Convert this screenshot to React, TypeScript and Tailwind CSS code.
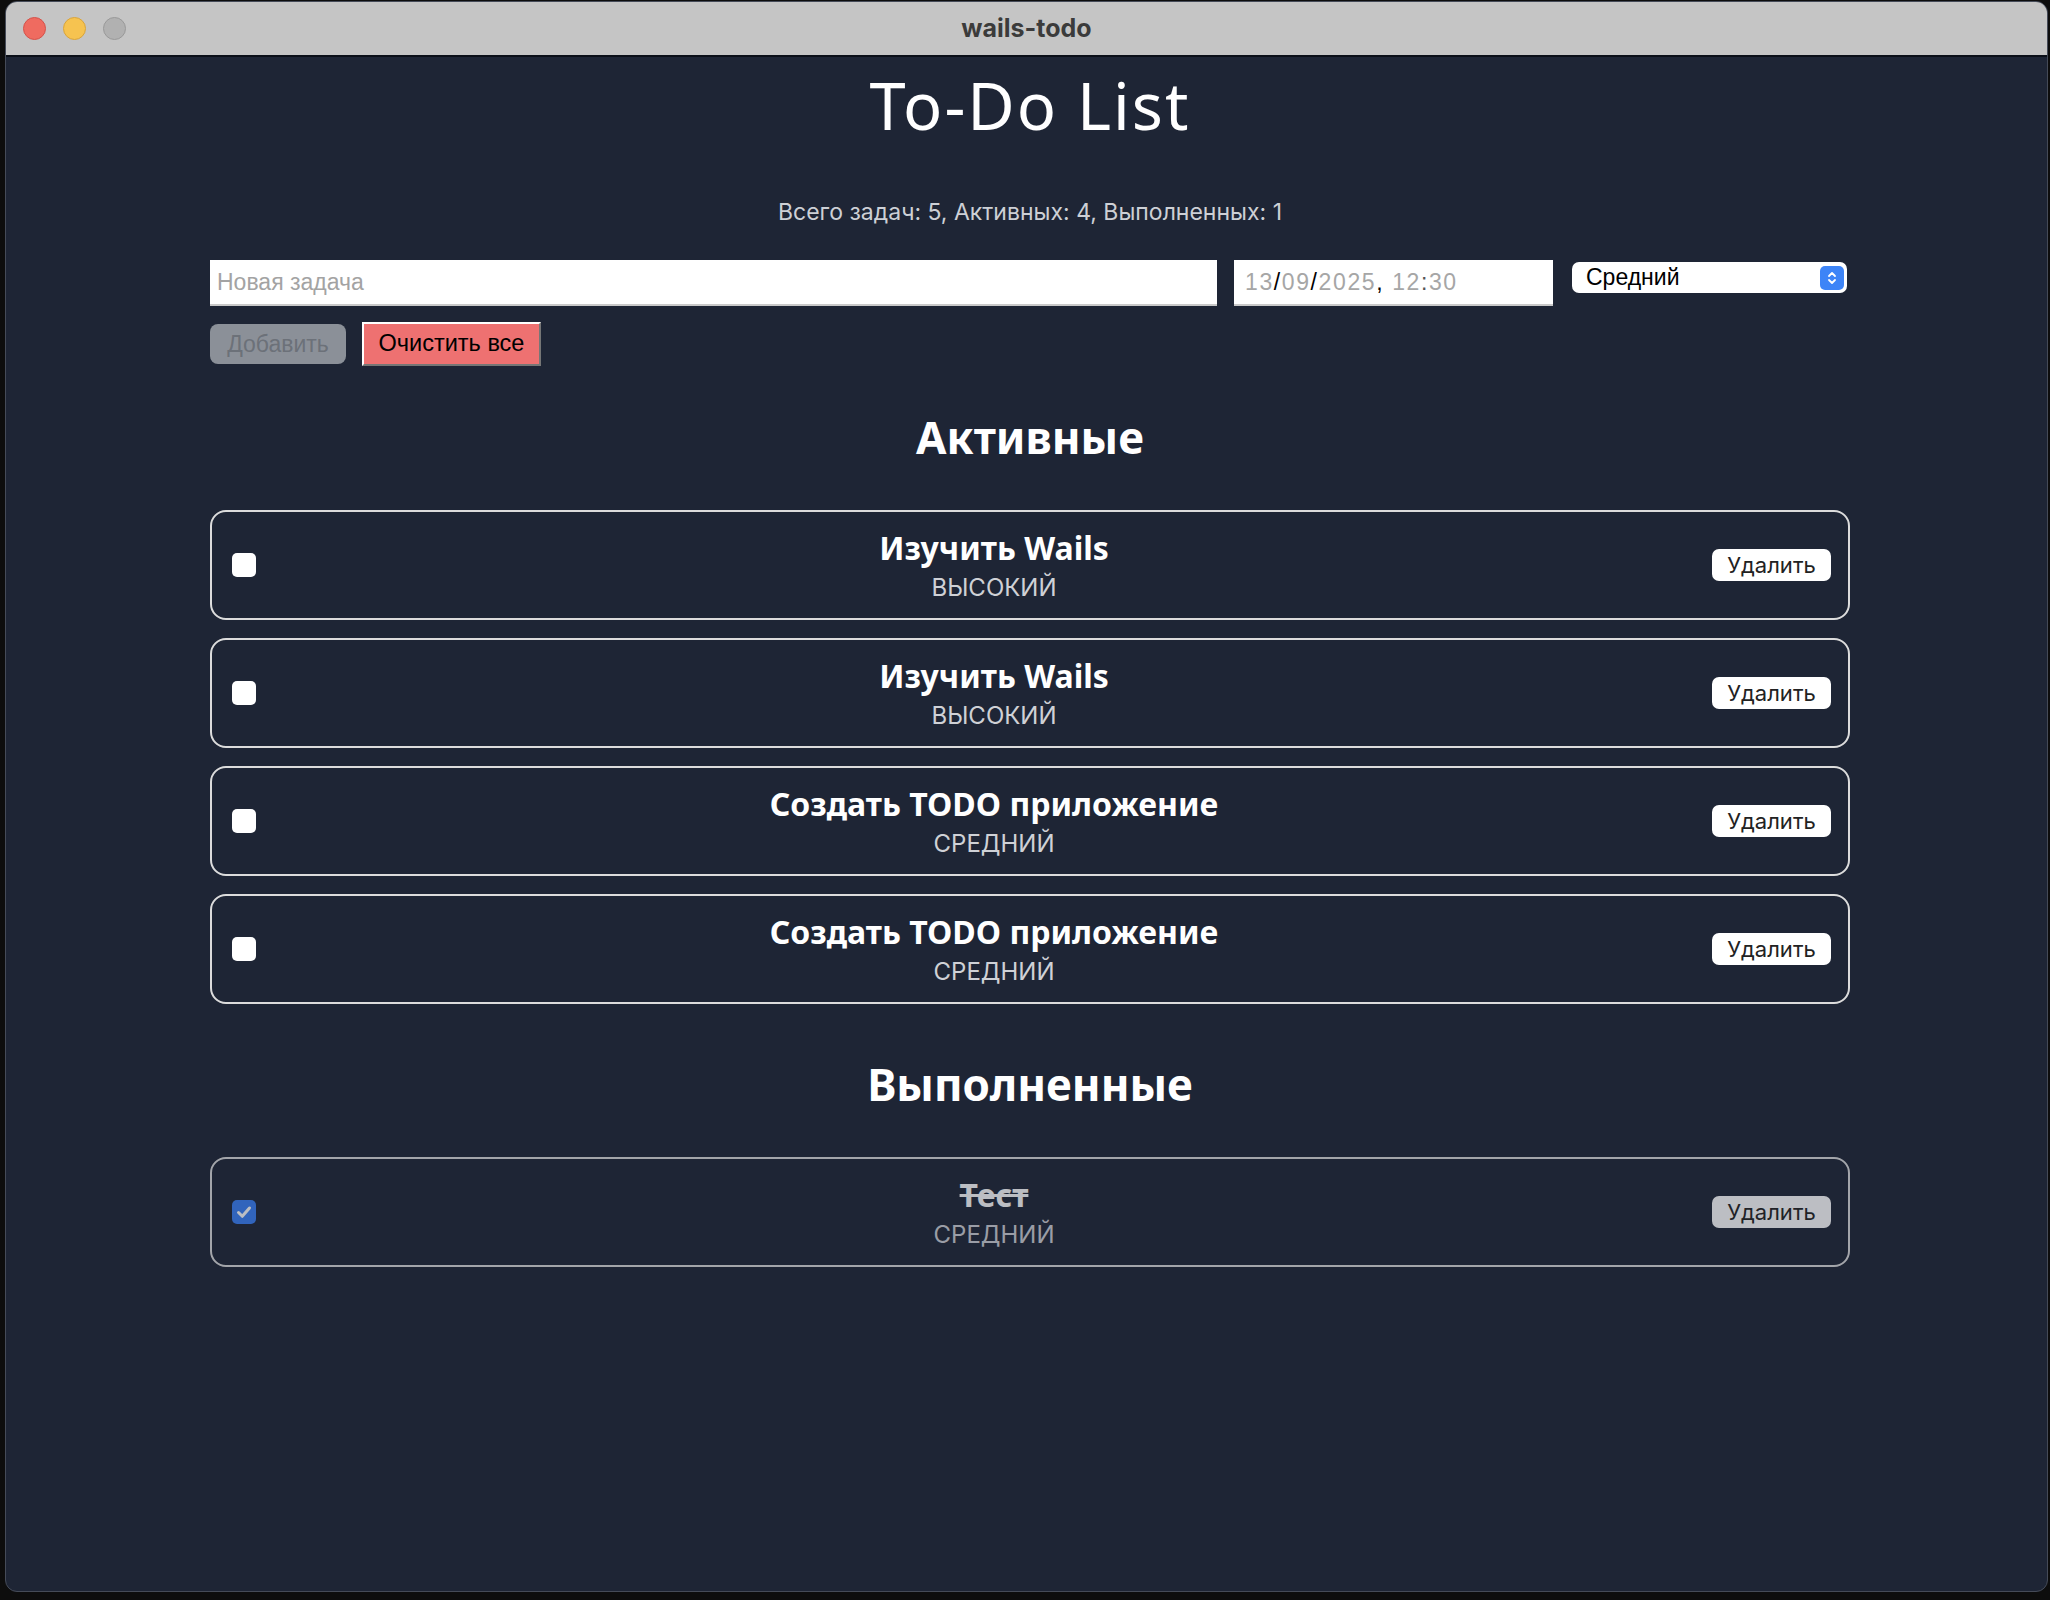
import React from 'react';

type Task = { id: number; title: string; priority: string; done: boolean };

const tasks: Task[] = [
  { id: 1, title: 'Изучить Wails', priority: 'высокий', done: false },
  { id: 2, title: 'Изучить Wails', priority: 'высокий', done: false },
  { id: 3, title: 'Создать TODO приложение', priority: 'средний', done: false },
  { id: 4, title: 'Создать TODO приложение', priority: 'средний', done: false },
  { id: 5, title: 'Тест', priority: 'средний', done: true },
];

const headFont = { fontFamily: '"Noto Sans", "Open Sans", sans-serif' };
const uiFont = { fontFamily: 'Inter, "Noto Sans", sans-serif' };
const inputFont = { fontFamily: '"Liberation Sans", Arial, sans-serif' };

const Checkbox: React.FC<{ checked: boolean }> = ({ checked }) => (
  <span
    className={
      checked
        ? 'flex h-[24px] w-[24px] shrink-0 items-center justify-center rounded-[5px] bg-[#3a80f5]'
        : 'flex h-[24px] w-[24px] shrink-0 items-center justify-center rounded-[5px] bg-white'
    }
  >
    {checked && (
      <svg width="20" height="20" viewBox="0 0 20 20" fill="none">
        <path d="M4.5 10.5l3.8 3.8L15.5 6" stroke="#ffffff" strokeWidth="3" strokeLinecap="round" strokeLinejoin="round" />
      </svg>
    )}
  </span>
);

const TaskCard: React.FC<{ task: Task }> = ({ task }) => (
  <div
    className={
      'flex h-[110px] items-center rounded-[16px] border-2 border-[#dcdcdc] pl-[20px] pr-[17px] ' +
      (task.done ? 'opacity-70' : '')
    }
  >
    <Checkbox checked={task.done} />
    <div className="-mt-[2px] flex flex-1 flex-col items-center pl-[20px]">
      <span
        className={'text-[32px] leading-[44px] font-bold text-white ' + (task.done ? 'line-through' : '')}
        style={headFont}
      >
        {task.title}
      </span>
      <span className="mt-[3px] text-[24px] leading-[30px] uppercase text-[#cfd1d6]" style={uiFont}>
        {task.priority}
      </span>
    </div>
    <button
      className="h-[32px] w-[119px] rounded-[7px] bg-white text-[22px] leading-none text-[#222222]"
      style={uiFont}
    >
      Удалить
    </button>
  </div>
);

export default function App() {
  const active = tasks.filter((t) => !t.done);
  const done = tasks.filter((t) => t.done);

  return (
    <div className="h-[1600px] w-[2050px] bg-[#0d0d0d] pl-[5px] pt-[1px]">
      <div className="flex h-[1591px] w-[2043px] flex-col overflow-hidden rounded-[12px] border border-[#454b58] bg-[#1e2535]">
        {/* title bar */}
        <div className="grid h-[55px] shrink-0 grid-cols-[1fr_auto_1fr] items-center border-b-2 border-[#0b0f18] bg-[#c5c5c5]">
          <div className="flex items-center gap-[17px] pl-[17px]">
            <span className="h-[23px] w-[23px] rounded-full border border-[#d4524a] bg-[#ef6b60]" />
            <span className="h-[23px] w-[23px] rounded-full border border-[#d9a43b] bg-[#f6c350]" />
            <span className="h-[23px] w-[23px] rounded-full border border-[#999999] bg-[#b1b1b1]" />
          </div>
          <span className="text-[25px] font-bold text-[#3b3b3b]" style={uiFont}>
            wails-todo
          </span>
          <div />
        </div>

        {/* content */}
        <div className="pl-[204px]">
          <div className="flex w-[1640px] flex-col">
            <h1
              className="mt-[16px] text-center text-[65px] leading-[65px] tracking-[2px] text-white"
              style={headFont}
            >
              To-Do List
            </h1>
            <p className="mt-[62px] text-center text-[23px] leading-[24px] text-[#cdd0d6]" style={uiFont}>
              Всего задач: 5, Активных: 4, Выполненных: 1
            </p>

            <div className="mt-[36px] flex items-start">
              <div
                className="flex h-[46px] w-[1007px] items-center border-b-2 border-[#c9c9c9] bg-white pl-[7px] text-[23px] text-[#a3a3a3]"
                style={inputFont}
              >
                Новая задача
              </div>
              <div
                className="ml-[17px] flex h-[46px] w-[319px] items-center border-b-2 border-[#c9c9c9] bg-white pl-[11px] text-[23px] tracking-[1.6px] text-[#a6a6a6]"
                style={inputFont}
              >
                13<span className="text-black">/</span>09<span className="text-black">/</span>2025
                <span className="text-black">,</span>&nbsp;12<span className="text-[#555555]">:</span>30
              </div>
              <div
                className="ml-[19px] mt-[2px] flex h-[31px] w-[275px] items-center justify-between rounded-[7px] bg-white pl-[14px] pr-[3px] text-[23px] text-black"
                style={inputFont}
              >
                <span>Средний</span>
                <span className="flex h-[24px] w-[24px] items-center justify-center rounded-[5px] bg-[#3d84f7]">
                  <svg width="12" height="18" viewBox="0 0 12 18" fill="none">
                    <path d="M3 7l3-3 3 3M3 11l3 3 3-3" stroke="#ffffff" strokeWidth="1.8" strokeLinecap="round" strokeLinejoin="round" />
                  </svg>
                </span>
              </div>
            </div>

            <div className="mt-[16px] flex items-center gap-[16px]">
              <button
                className="h-[40px] w-[136px] rounded-[8px] bg-[#8b9098] text-[23px] text-[#6c7179]"
                style={inputFont}
              >
                Добавить
              </button>
              <button
                className="h-[44px] w-[179px] border-2 border-t-white border-l-white border-b-[#767676] border-r-[#767676] bg-[#ee7171] text-[23.5px] text-black"
                style={inputFont}
              >
                Очистить все
              </button>
            </div>

            <h2 className="mt-[45px] text-center text-[44px] leading-[52px] font-bold text-white" style={headFont}>
              Активные
            </h2>
            <div className="mt-[47px] flex flex-col gap-[18px]">
              {active.map((t) => (
                <TaskCard key={t.id} task={t} />
              ))}
            </div>

            <h2 className="mt-[54px] text-center text-[44px] leading-[52px] font-bold text-white" style={headFont}>
              Выполненные
            </h2>
            <div className="mt-[47px] flex flex-col gap-[18px]">
              {done.map((t) => (
                <TaskCard key={t.id} task={t} />
              ))}
            </div>
          </div>
        </div>
      </div>
    </div>
  );
}
